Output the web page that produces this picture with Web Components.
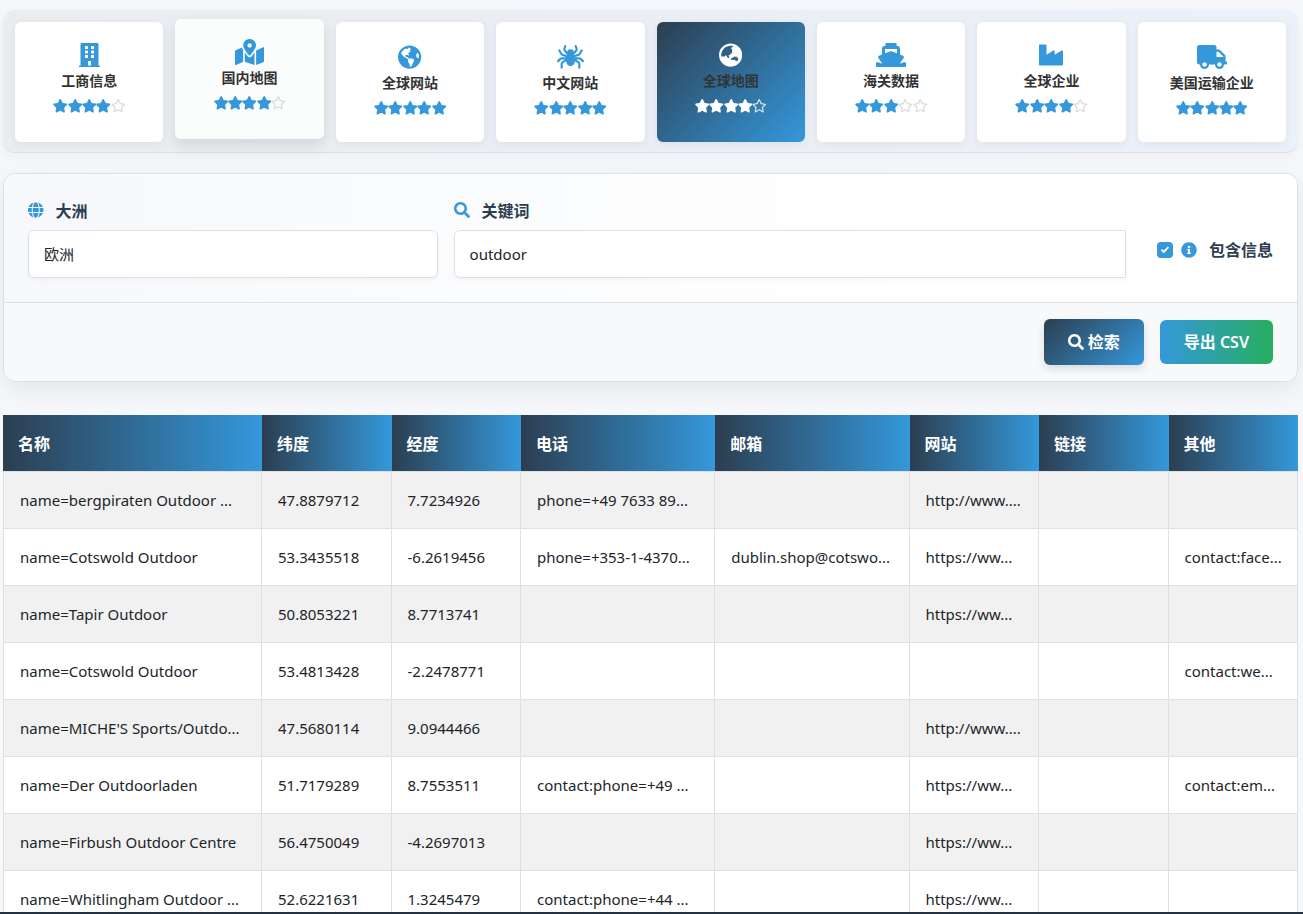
<!DOCTYPE html>
<html lang="zh-CN">
<head>
<meta charset="utf-8">
<meta name="viewport" content="width=device-width, initial-scale=1">
<title>全球地图</title>
<style>
  html, body { margin: 0; height: 100%; }
  body {
    font-family: "Noto Sans", "Noto Sans CJK SC", sans-serif;
    color: #212529;
    background: #f5f7fb;
    overflow: hidden;
  }
</style>
</head>
<body>
<lead-app></lead-app>
<script>
const BLUE = '#3498db';
const ICONS = {
  building: ['0 0 448 512', 'M436 480h-20V24c0-13-11-24-24-24H56C43 0 32 11 32 24v456H12c-7 0-12 5-12 12v20h448v-20c0-7-5-12-12-12zM128 76c0-7 5-12 12-12h40c7 0 12 5 12 12v40c0 7-5 12-12 12h-40c-7 0-12-5-12-12zm0 96c0-7 5-12 12-12h40c7 0 12 5 12 12v40c0 7-5 12-12 12h-40c-7 0-12-5-12-12zm52 148h-40c-7 0-12-5-12-12v-40c0-7 5-12 12-12h40c7 0 12 5 12 12v40c0 7-5 12-12 12zm76 160h-64v-84c0-7 5-12 12-12h40c7 0 12 5 12 12zm64-172c0 7-5 12-12 12h-40c-7 0-12-5-12-12v-40c0-7 5-12 12-12h40c7 0 12 5 12 12zm0-96c0 7-5 12-12 12h-40c-7 0-12-5-12-12v-40c0-7 5-12 12-12h40c7 0 12 5 12 12zm0-96c0 7-5 12-12 12h-40c-7 0-12-5-12-12V76c0-7 5-12 12-12h40c7 0 12 5 12 12z'],
  map: ['0 0 576 512', 'M288 0c-69.59 0-126 56.41-126 126 0 56.26 82.35 158.8 113.9 196.02 6.39 7.54 17.82 7.54 24.2 0C331.65 284.8 414 182.26 414 126 414 56.41 357.59 0 288 0zm0 168c-23.2 0-42-18.8-42-42s18.8-42 42-42 42 18.8 42 42-18.8 42-42 42zM20.12 215.95A32.006 32.006 0 0 0 0 245.66v250.32c0 11.32 11.43 19.06 21.94 14.86L160 448V214.92c-8.84-15.98-16.07-31.54-21.25-46.42L20.12 215.95zM288 359.67c-14.07 0-27.38-6.18-36.51-16.96-19.66-23.2-40.57-49.62-59.49-76.72v182l192 64V266c-18.92 27.09-39.82 53.52-59.49 76.72-9.13 10.77-22.44 16.95-36.51 16.95zm266.06-198.51L416 224v288l139.88-55.95A31.996 31.996 0 0 0 576 426.34V176.02c0-11.32-11.43-19.06-21.94-14.86z'],
  americas: ['0 0 496 512', 'M248 8C111.03 8 0 119.03 0 256s111.03 248 248 248 248-111.03 248-248S384.97 8 248 8zm82.29 357.6c-3.9 3.88-7.99 7.95-11.31 11.28-2.99 3-5.1 6.7-6.17 10.71-1.51 5.66-2.73 11.38-4.77 16.87l-17.39 46.85c-13.76 3-28 4.69-42.65 4.69v-27.38c1.69-12.62-7.64-36.26-22.63-51.25-6-6-9.37-14.14-9.37-22.63v-32.01c0-11.64-6.27-22.34-16.46-27.97-14.37-7.95-34.81-19.06-48.81-26.11-11.48-5.78-22.1-13.14-31.65-21.75l-.8-.72a114.792 114.792 0 0 1-18.06-20.74c-9.38-13.77-24.66-36.42-34.59-51.14 20.47-45.5 57.36-82.04 103.2-101.89l24.01 12.01C203.48 89.74 216 82.01 216 70.11v-11.3c7.99-1.29 16.12-2.11 24.39-2.42l28.3 28.3c6.25 6.25 6.25 16.38 0 22.63L264 112l-10.34 10.34c-3.12 3.12-3.12 8.19 0 11.31l4.69 4.69c3.12 3.12 3.12 8.19 0 11.31l-8 8a8.008 8.008 0 0 1-5.66 2.34h-8.99c-2.08 0-4.08.81-5.58 2.27l-9.92 9.65a8.008 8.008 0 0 0-1.58 9.31l15.59 31.19c2.66 5.32-1.21 11.58-7.15 11.58h-5.64c-1.93 0-3.79-.7-5.24-1.96l-9.28-8.06a16.017 16.017 0 0 0-15.55-3.1l-31.17 10.39a11.95 11.95 0 0 0-8.17 11.34c0 4.53 2.56 8.66 6.61 10.69l11.08 5.54c9.41 4.71 19.79 7.16 30.31 7.16s22.59 27.29 32 32h66.75c8.49 0 16.62 3.37 22.63 9.37l13.69 13.69a30.503 30.503 0 0 1 8.93 21.57 46.536 46.536 0 0 1-13.72 32.98zM417 274.25c-5.79-1.45-10.84-5-14.15-9.97l-17.98-26.97a23.97 23.97 0 0 1 0-26.62l19.59-29.38c2.32-3.47 5.5-6.29 9.24-8.15l12.98-6.49C440.2 193.59 448 223.87 448 256c0 8.67-.74 17.16-1.82 25.54L417 274.25z'],
  asia: ['0 0 496 512', 'M248 8C111.03 8 0 119.03 0 256s111.03 248 248 248 248-111.03 248-248S384.97 8 248 8zm-11.34 240.23c-2.89 4.82-8.1 7.77-13.72 7.77h-.31c-4.24 0-8.31 1.69-11.31 4.69l-5.66 5.66c-3.12 3.12-3.12 8.19 0 11.31l5.66 5.66c3 3 4.69 7.07 4.69 11.31V304c0 8.84-7.16 16-16 16h-6.11c-6.06 0-11.6-3.42-14.31-8.85l-22.62-45.23c-2.44-4.88-8.95-5.94-12.81-2.08l-19.47 19.46c-3 3-7.07 4.69-11.31 4.69H50.81C49.12 277.55 48 266.92 48 256c0-110.28 89.72-200 200-200 21.51 0 42.2 3.51 61.63 9.82l-50.16 38.53c-5.11 3.41-4.63 11.06.86 13.81l10.83 5.41c5.42 2.71 8.84 8.25 8.84 14.31V216c0 4.42-3.58 8-8 8h-3.06c-3.03 0-5.8-1.71-7.15-4.42-1.56-3.12-5.96-3.29-7.76-.3l-17.37 28.95zM408 358.43c0 4.24-1.69 8.31-4.69 11.31l-9.57 9.57c-3 3-7.07 4.69-11.31 4.69h-15.16c-4.24 0-8.31-1.69-11.31-4.69l-13.01-13.01a26.767 26.767 0 0 0-25.42-7.04l-21.27 5.32c-1.27.32-2.57.48-3.88.48h-10.34c-4.24 0-8.31-1.69-11.31-4.69l-11.91-11.91a8.008 8.008 0 0 1-2.34-5.66v-10.2c0-3.27 1.99-6.21 5.03-7.43l39.34-15.74c1.98-.79 3.86-1.82 5.59-3.05l23.71-16.89a7.978 7.978 0 0 1 4.64-1.48h12.09c3.23 0 6.15 1.94 7.39 4.93l5.35 12.85a4 4 0 0 0 3.69 2.46h3.8c1.78 0 3.35-1.18 3.84-2.88l4.2-14.47c.5-1.71 2.06-2.88 3.84-2.88h6.06c2.21 0 4 1.79 4 4v12.93c0 2.12.84 4.16 2.34 5.66l11.91 11.91c3 3 4.69 7.07 4.69 11.31v24.6z'],
  industry: ['0 0 512 512', 'M475.115 163.781L336 252.309v-68.28c0-18.916-20.931-30.399-36.885-20.248L160 252.309V56c0-13.255-10.745-24-24-24H24C10.745 32 0 42.745 0 56v400c0 13.255 10.745 24 24 24h464c13.255 0 24-10.745 24-24V184.029c0-18.917-20.931-30.399-36.885-20.248z'],
  ship: ['0 0 640 512', 'M224 0h192c13 0 24 11 24 24v40h24c26 0 48 22 48 48v134l64 26c20 8 27 31 13 48L506 441c25-2 43-12 54-20 14-8 24-13 48-13h16c9 0 16 7 16 16v72c0 9-7 16-16 16H16c-9 0-16-7-16-16v-72c0-9 7-16 16-16h16c24 0 34 5 48 13 11 8 29 18 54 20L51 320c-14-17-7-40 13-48l64-26V112c0-26 22-48 48-48h24V24c0-13 11-24 24-24zM192 128v92l104-41c16-6 32-6 48 0l104 41v-92z'],
  truck: ['0 0 640 512', 'M624 352h-16V243.9c0-12.7-5.1-24.9-14.1-33.9L494 110.1c-9-9-21.2-14.1-33.9-14.1H416V48c0-26.5-21.5-48-48-48H48C21.5 0 0 21.5 0 48v320c0 26.5 21.5 48 48 48h16c0 53 43 96 96 96s96-43 96-96h128c0 53 43 96 96 96s96-43 96-96h48c8.8 0 16-7.2 16-16v-32c0-8.8-7.2-16-16-16zM160 464c-26.5 0-48-21.5-48-48s21.5-48 48-48 48 21.5 48 48-21.5 48-48 48zm320 0c-26.5 0-48-21.5-48-48s21.5-48 48-48 48 21.5 48 48-21.5 48-48 48zm80-208H416V144h44.1l99.9 99.9V256z'],
  star: ['16 0 544 512', 'M316.9 18C311.6 7 300.4 0 288.1 0s-23.4 7-28.8 18L195 150.3 51.4 171.5c-12 1.8-22 10.2-25.7 21.7s-.7 24.2 7.9 32.7L137.8 329 113.2 474.7c-2 12 3 24.2 12.9 31.3s23 8 33.8 2.3l128.3-68.5 128.3 68.5c10.8 5.7 23.9 4.9 33.8-2.3s14.9-19.3 12.9-31.3L438.5 329 542.7 225.9c8.6-8.5 11.7-21.2 7.9-32.7s-13.7-19.9-25.7-21.7L381.2 150.3 316.9 18z'],
  hollow: ['16 0 544 512', 'M287.9 0c9.2 0 17.6 5.2 21.6 13.5l68.6 141.3 153.2 22.6c9 1.3 16.5 7.6 19.3 16.3s.5 18.1-5.9 24.5L433.6 328.4l26.2 155.6c1.5 9-2.2 18.1-9.7 23.5s-17.3 6-25.3 1.7l-137-73.2L151 509.1c-8.1 4.3-17.9 3.7-25.3-1.7s-11.2-14.5-9.7-23.5l26.2-155.6L31.1 218.2c-6.5-6.4-8.7-15.9-5.9-24.5s10.3-14.9 19.3-16.3l153.2-22.6L266.3 13.5C270.4 5.2 278.7 0 287.9 0zm0 79L235.4 187.2c-3.5 7.1-10.2 12.1-18.1 13.3L99 217.9 184.9 303c5.5 5.5 8.1 13.3 6.8 21L171.4 443.7l105.2-56.2c7.1-3.8 15.6-3.8 22.6 0l105.2 56.2L384.2 324.1c-1.3-7.7 1.2-15.5 6.8-21l85.9-85.1L358.6 200.5c-7.8-1.2-14.6-6.1-18.1-13.3L287.9 79z'],
  search: ['0 0 512 512', 'M505 442.7L405.3 343c-4.5-4.5-10.6-7-17-7H372c27.6-35.3 44-79.7 44-128C416 93.1 322.9 0 208 0S0 93.1 0 208s93.1 208 208 208c48.3 0 92.7-16.4 128-44v16.3c0 6.4 2.5 12.5 7 17l99.7 99.7c9.4 9.4 24.6 9.4 33.9 0l28.3-28.3c9.4-9.4 9.4-24.6.1-34zM208 336c-70.7 0-128-57.2-128-128 0-70.7 57.2-128 128-128 70.7 0 128 57.2 128 128 0 70.7-57.2 128-128 128z'],
  info: ['0 0 512 512', 'M256 8C119.043 8 8 119.083 8 256c0 136.997 111.043 248 248 248s248-111.003 248-248C504 119.083 392.957 8 256 8zm0 110c23.196 0 42 18.804 42 42s-18.804 42-42 42-42-18.804-42-42 18.804-42 42-42zm56 254c0 6.627-5.373 12-12 12h-88c-6.627 0-12-5.373-12-12v-24c0-6.627 5.373-12 12-12h12v-64h-12c-6.627 0-12-5.373-12-12v-24c0-6.627 5.373-12 12-12h64c6.627 0 12 5.373 12 12v100h12c6.627 0 12 5.373 12 12v24z'],
  globe: ['0 0 496 512', 'M336.5 160C322 70.7 287.8 8 248 8s-74 62.7-88.5 152h177zM152 256c0 22.2 1.2 43.5 3.3 64h185.3c2.1-20.5 3.3-41.8 3.3-64s-1.2-43.5-3.3-64H155.3c-2.1 20.5-3.3 41.8-3.3 64zm324.7-96c-28.6-67.9-86.5-120.4-158-141.6 24.4 33.8 41.2 84.7 50 141.6h108zM177.2 18.4C105.8 39.6 47.8 92.1 19.3 160h108c8.7-56.9 25.5-107.8 49.9-141.6zM487.4 192H372.7c2.1 21 3.3 42.5 3.3 64s-1.2 43-3.3 64h114.6c5.5-20.5 8.6-41.8 8.6-64s-3.1-43.5-8.5-64zM120 256c0-21.5 1.2-43 3.3-64H8.6C3.2 212.5 0 233.8 0 256s3.2 43.5 8.6 64h114.6c-2-21-3.2-42.5-3.2-64zm39.5 96c14.5 89.3 48.7 152 88.5 152s74-62.7 88.5-152h-177zm159.3 141.6c71.4-21.2 129.4-73.7 158-141.6h-108c-8.8 56.9-25.6 107.8-50 141.6zM19.3 352c28.6 67.9 86.5 120.4 158 141.6-24.4-33.8-41.2-84.7-50-141.6h-108z'],
  check: ['0 0 512 512', 'M80 265 205 390 432 163 375 106 205 276 137 208z']
};
const SPIDER = `<svg viewBox="0 0 576 512" aria-hidden="true"><g fill="none" stroke="currentColor" stroke-width="46" stroke-linecap="round" stroke-linejoin="round"><path d="M176 24 158 80q-6 22 8 38l58 68M400 24l18 56q6 22-8 38l-58 68M50 116l40 70q10 18 30 24l96 30M526 116l-40 70q-10 18-30 24l-96 30M24 344l48-48q12-12 34-12h110M552 344l-48-48q-12-12-34-12H360M100 486v-80q0-20 14-34l102-64M476 486v-80q0-20-14-34l-102-64"/></g><ellipse cx="288" cy="310" rx="100" ry="140" fill="currentColor"/><circle cx="288" cy="164" r="72" fill="currentColor"/></svg>`;

function define(name, render) {
  customElements.define(name, class extends HTMLElement {
    connectedCallback() {
      if (this.shadowRoot) return;
      this.attachShadow({ mode: 'open' }).innerHTML = render(this);
    }
  });
}

define('app-icon', el => {
  const name = el.getAttribute('name');
  const style = `<style>:host{display:block;flex:none;height:16px}svg{display:block;height:100%;width:auto;fill:currentColor}</style>`;
  if (name === 'spider') return style + SPIDER;
  const [box, path] = ICONS[name];
  return `${style}<svg viewBox="${box}" aria-hidden="true"><path fill-rule="evenodd" d="${path}"/></svg>`;
});

define('star-rating', el => {
  const n = +el.getAttribute('value');
  const stars = [1, 2, 3, 4, 5].map(i => {
    const [box, path] = ICONS[i <= n ? 'star' : 'hollow'];
    return `<svg class="${i <= n ? 'on' : 'off'}" viewBox="${box}" aria-hidden="true"><path d="${path}"/></svg>`;
  }).join('');
  return `<style>
    :host{box-sizing:border-box;display:flex;align-items:flex-start;width:72px;padding-top:4px;height:${n === 5 ? 22 : 26}px}
    svg{flex:1 1 0;min-width:0;display:block}
    .on{fill:var(--star-on,${BLUE})}
    .off{fill:var(--star-off,#dcdcdc)}
  </style>${stars}`;
});

define('nav-card', el => `<style>
    :host{display:block;flex:1 1 0;min-width:0}
    a{box-sizing:border-box;display:flex;flex-direction:column;align-items:center;justify-content:center;height:120px;border-radius:6px;
      background:#fff;color:#333;text-decoration:none;box-shadow:0 2px 8px rgba(0,0,0,.06)}
    app-icon{height:24px;color:${BLUE}}
    app-icon[name=map]{height:26px;margin:-1px 0}
    span{font-size:14px;line-height:20px;font-weight:700;margin:4px 0;white-space:nowrap}
    :host([hovered]) a{background:#fbfdfd;box-shadow:0 6px 14px rgba(0,0,0,.1);transform:translateY(-3px)}
    :host([active]) a{background:linear-gradient(135deg,#2c3e50,${BLUE});--star-on:#fff;--star-off:#d3e3f0}
    :host([active]) app-icon{color:#fff}
  </style>
  <a href="#"><app-icon name="${el.getAttribute('icon')}"></app-icon><span><slot></slot></span><star-rating value="${el.getAttribute('stars')}"></star-rating></a>`);

define('nav-bar', () => `<style>
    :host{display:flex;gap:12px;padding:12px 12px 10px;border-radius:12px;border-bottom:1px solid #dcdfe3;
      background:linear-gradient(90deg,#eaecf0,#ebf1f9);box-shadow:0 4px 14px rgba(0,0,0,.04)}
  </style><slot></slot>`);

define('search-panel', () => `<style>
    :host{display:block;border:1px solid #dee0e3;border-radius:12px;overflow:hidden;background:#f8f9fb;box-shadow:0 8px 24px rgba(0,0,0,.07)}
    .fields{display:grid;grid-template-columns:410fr 673fr 131px;column-gap:16px;padding:24px;border-bottom:1px solid #dee0e3;
      background:linear-gradient(90deg,#f6f8fb,#fff 70%)}
    .cap{display:flex;align-items:center;gap:12px;height:24px;margin-bottom:8px;font-size:16px;font-weight:600;color:#2c3e50}
    app-icon{color:${BLUE}}
    select,input[type=text]{box-sizing:border-box;display:block;width:100%;height:48px;margin:0;padding:0 15px;font:15px/24px "Noto Sans","Noto Sans CJK SC",sans-serif;
      color:#212529;background:#fff;border:1px solid #dee0e3;border-radius:6px;appearance:none;box-shadow:0 2px 4px rgba(0,0,0,.04)}
    input[type=text]{border-radius:6px 0 0 6px}
    .flag{align-self:end;justify-self:end;display:flex;align-items:center;gap:8px;font-size:16px;line-height:24px;font-weight:600;color:#2c3e50;white-space:nowrap;margin-bottom:16px}
    .flag span{margin-left:4px}
    .tick{display:grid;width:16px;height:16px}
    .tick>*{grid-area:1/1}
    .tick input{appearance:none;margin:0;width:16px;height:16px;border-radius:4px;background:${BLUE}}
    .tick app-icon{height:12px;place-self:center;color:#fff;pointer-events:none}
    .actions{display:flex;justify-content:flex-end;align-items:center;gap:16px;height:78px;padding:0 24px}
    button{display:flex;align-items:center;gap:4px;border:0;border-radius:6px;padding:0 24px;font:600 16px/24px "Noto Sans","Noto Sans CJK SC",sans-serif;color:#fff;white-space:nowrap}
    .go{height:46px;background:linear-gradient(135deg,#2c3e50,${BLUE});box-shadow:0 4px 8px rgba(0,0,0,.12)}
    .go app-icon{color:#fff}
    .csv{height:44px;background:linear-gradient(90deg,${BLUE},#27ae60)}
  </style>
  <form onsubmit="return false">
    <div class="fields">
      <div><label class="cap" for="area"><app-icon name="globe"></app-icon>大洲</label>
        <select id="area"><option>欧洲</option></select></div>
      <div><label class="cap" for="word"><app-icon name="search"></app-icon>关键词</label>
        <input type="text" id="word" value="outdoor"></div>
      <label class="flag"><i class="tick"><input type="checkbox" checked><app-icon name="check"></app-icon></i><app-icon name="info"></app-icon><span>包含信息</span></label>
    </div>
    <div class="actions">
      <button class="go" type="submit"><app-icon name="search"></app-icon>检索</button>
      <button class="csv" type="button">导出 CSV</button>
    </div>
  </form>`);

const HEADS = ['名称', '纬度', '经度', '电话', '邮箱', '网站', '链接', '其他'];
const ROWS = [
  ['name=bergpiraten Outdoor ...', '47.8879712', '7.7234926', 'phone=+49 7633 89...', '', 'http://www....', '', ''],
  ['name=Cotswold Outdoor', '53.3435518', '-6.2619456', 'phone=+353-1-4370...', 'dublin.shop@cotswo...', 'https://ww...', '', 'contact:face...'],
  ['name=Tapir Outdoor', '50.8053221', '8.7713741', '', '', 'https://ww...', '', ''],
  ['name=Cotswold Outdoor', '53.4813428', '-2.2478771', '', '', '', '', 'contact:we...'],
  ["name=MICHE'S Sports/Outdo...", '47.5680114', '9.0944466', '', '', 'http://www....', '', ''],
  ['name=Der Outdoorladen', '51.7179289', '8.7553511', 'contact:phone=+49 ...', '', 'https://ww...', '', 'contact:em...'],
  ['name=Firbush Outdoor Centre', '56.4750049', '-4.2697013', '', '', 'https://ww...', '', ''],
  ['name=Whitlingham Outdoor ...', '52.6221631', '1.3245479', 'contact:phone=+44 ...', '', 'https://ww...', '', '']
];

define('result-table', () => `<style>
    :host{display:block}
    table{width:100%;table-layout:fixed;border-collapse:separate;border-spacing:0;background:#fff}
    col{width:10%} .w20{width:20%} .w15{width:15%}
    th{height:56px;padding:0 15px;text-align:left;font-size:16px;font-weight:700;color:#fff;background:linear-gradient(90deg,#2c3e50,${BLUE})}
    td{box-sizing:border-box;height:57px;padding:0 16px;font-size:15px;white-space:nowrap;overflow:hidden;
      border-bottom:1px solid #dee0e2;border-right:1px solid #dee0e2}
    td:first-child{border-left:1px solid #dee0e2}
    tbody tr:first-child td{height:58px;border-top:1px solid #dee0e2}
    tbody tr:nth-child(odd){background:#f1f1f1}
  </style>
  <table>
    <colgroup><col class="w20"><col><col><col class="w15"><col class="w15"><col><col><col></colgroup>
    <thead><tr>${HEADS.map(h => `<th scope="col">${h}</th>`).join('')}</tr></thead>
    <tbody>${ROWS.map(r => `<tr>${r.map(c => `<td>${c}</td>`).join('')}</tr>`).join('')}</tbody>
  </table>`);

define('lead-app', () => `<style>
    :host{box-sizing:border-box;display:flex;flex-direction:column;height:100vh;border-bottom:2px solid #22303f}
    main{flex:1;min-height:0;overflow:hidden;padding:10px 5px 0 3px}
    search-panel{margin:20px 0 33px}
  </style>
  <main>
    <nav-bar role="navigation">
      <nav-card icon="building" stars="4">工商信息</nav-card>
      <nav-card icon="map" stars="4" hovered>国内地图</nav-card>
      <nav-card icon="americas" stars="5">全球网站</nav-card>
      <nav-card icon="spider" stars="5">中文网站</nav-card>
      <nav-card icon="asia" stars="4" active>全球地图</nav-card>
      <nav-card icon="ship" stars="3">海关数据</nav-card>
      <nav-card icon="industry" stars="4">全球企业</nav-card>
      <nav-card icon="truck" stars="5">美国运输企业</nav-card>
    </nav-bar>
    <search-panel></search-panel>
    <result-table></result-table>
  </main>`);
</script>
</body>
</html>
